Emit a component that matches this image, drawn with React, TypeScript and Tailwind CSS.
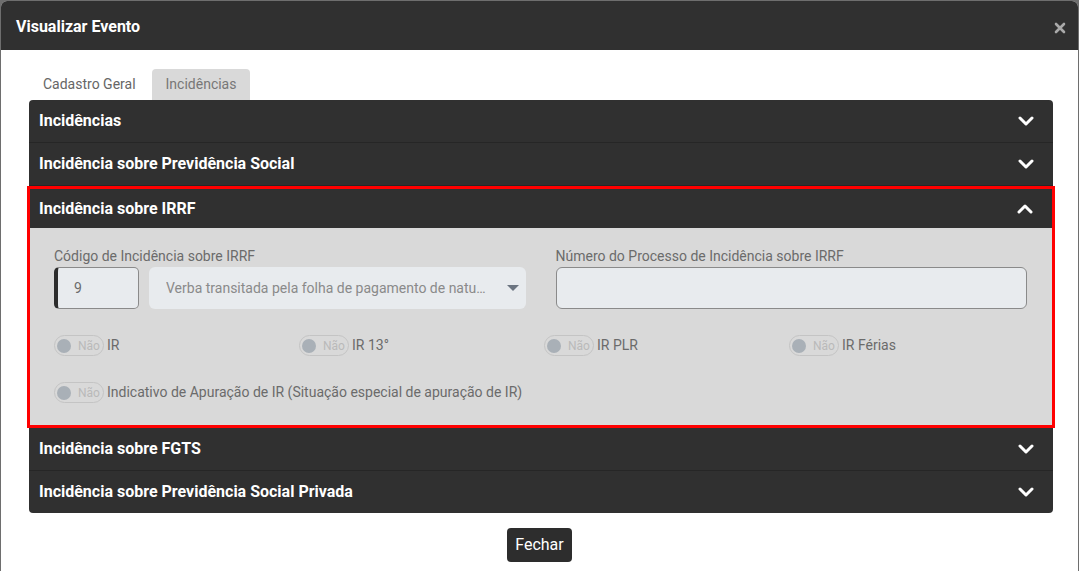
import React from 'react';

const Chevron = ({ up = false }: { up?: boolean }) => (
  <svg width="16" height="10" viewBox="0 0 16 10" className="block">
    <polyline
      points={up ? '2,8 8,2 14,8' : '2,2 8,8 14,2'}
      fill="none"
      stroke="#ffffff"
      strokeWidth="3"
      strokeLinecap="round"
      strokeLinejoin="round"
    />
  </svg>
);

const AccordionHeader = ({
  title,
  open = false,
  last = false,
  className = 'h-[43px] pl-[10px]',
}: {
  title: string;
  open?: boolean;
  last?: boolean;
  className?: string;
}) => (
  <div
    className={`flex items-center justify-between pr-[19px] text-white font-bold text-[16px] ${className} ${
      last ? '' : 'border-b border-[#262626]'
    }`}
  >
    <span>{title}</span>
    <Chevron up={open} />
  </div>
);

const Toggle = ({ label }: { label: string }) => (
  <div className="flex items-center gap-[3px]">
    <div className="flex items-center h-[21px] w-[50px] rounded-full border border-[#c4c4c4] pl-[2px]">
      <span className="w-[14px] h-[14px] rounded-full bg-[#a9b0b7]" />
      <span className="ml-[7px] text-[12px] text-[#b9b9b9]">Não</span>
    </div>
    <span className="text-[14px] text-[#6b6b6b]">{label}</span>
  </div>
);

export default function App() {
  return (
    <div
      className="w-[1079px] h-[571px] bg-[#6e6e6e] pl-px pt-px overflow-hidden"
      style={{ fontFamily: 'Roboto, "Liberation Sans", sans-serif' }}
    >
      <div className="w-[1077px] h-[600px] bg-white rounded-t-[6px] overflow-hidden">
        {/* header */}
        <div className="h-[49px] bg-[#303030] flex items-center justify-between pl-[15px] pr-[12px]">
          <h1 className="text-white font-bold text-[16px] mt-[2px]">Visualizar Evento</h1>
          <svg width="12" height="12" viewBox="0 0 12 12" className="mt-[5px]">
            <path d="M2 2 L10 10 M10 2 L2 10" stroke="#a9a9a9" strokeWidth="2.6" strokeLinecap="round" />
          </svg>
        </div>

        <div className="px-[28px] pt-[19px]">
          {/* tabs */}
          <div className="flex items-end h-[31px] text-[14px]">
            <div className="pl-[14px] pr-[16px] h-[31px] flex items-center text-[#666]">Cadastro Geral</div>
            <div className="px-[14px] h-[31px] flex items-center bg-[#d9d9d9] text-[#777] rounded-t-[4px]">Incidências</div>
          </div>

          {/* accordion */}
          <div className="w-[1024px] bg-[#303030] rounded-[4px]">
            <AccordionHeader title="Incidências" />
            <AccordionHeader title="Incidência sobre Previdência Social" />
            <div className="border-[3px] border-[#ff0000] -mx-[2px]">
              <AccordionHeader title="Incidência sobre IRRF" open last className="h-[39px] pl-[9px] pr-[17px]" />
              <div className="bg-[#d9d9d9] pl-[24px] pr-[25px] pt-[18px] pb-[22px]">
                <div className="grid grid-cols-2 gap-[30px]">
                  <div>
                    <label className="block text-[14px] text-[#6b6b6b] leading-[20px] mb-[1px]">
                      Código de Incidência sobre IRRF
                    </label>
                    <div className="flex gap-[10px]">
                      <div className="w-[85px] h-[42px] rounded-[5px] border border-[#8a8a8a] border-l-[4px] border-l-[#2c2c2c] bg-[#e8ebee] flex items-center pl-[16px] text-[14px] text-[#6b6b6b]">
                        9
                      </div>
                      <div className="flex-1 h-[42px] rounded-[6px] bg-[#e8ebee] flex items-center justify-between pl-[17px] pr-[7px] text-[14px] text-[#8a8a8a]">
                        <span className="truncate">Verba transitada pela folha de pagamento de natu…</span>
                        <svg width="12" height="7" viewBox="0 0 12 7">
                          <polygon points="0,0 12,0 6,6" fill="#6b7480" />
                        </svg>
                      </div>
                    </div>
                  </div>
                  <div>
                    <label className="block text-[14px] text-[#6b6b6b] leading-[20px] mb-[1px]">
                      Número do Processo de Incidência sobre IRRF
                    </label>
                    <div className="h-[42px] rounded-[6px] border border-[#8a8a8a] bg-[#e8ebee]" />
                  </div>
                </div>

                <div className="flex mt-[26px]">
                  <div className="w-[245px] shrink-0"><Toggle label="IR" /></div>
                  <div className="w-[245px] shrink-0"><Toggle label="IR 13°" /></div>
                  <div className="w-[245px] shrink-0"><Toggle label="IR PLR" /></div>
                  <div className="w-[239px] shrink-0"><Toggle label="IR Férias" /></div>
                </div>
                <div className="mt-[26px]">
                  <Toggle label="Indicativo de Apuração de IR (Situação especial de apuração de IR)" />
                </div>
              </div>
            </div>
            <AccordionHeader title="Incidência sobre FGTS" />
            <AccordionHeader title="Incidência sobre Previdência Social Privada" last className="h-[42px] pl-[10px]" />
          </div>

          {/* footer */}
          <div className="flex justify-center mt-[15px]">
            <button className="h-[34px] px-[8px] bg-[#2d2d2d] text-white text-[16px] rounded-[4px]">Fechar</button>
          </div>
        </div>
      </div>
    </div>
  );
}
